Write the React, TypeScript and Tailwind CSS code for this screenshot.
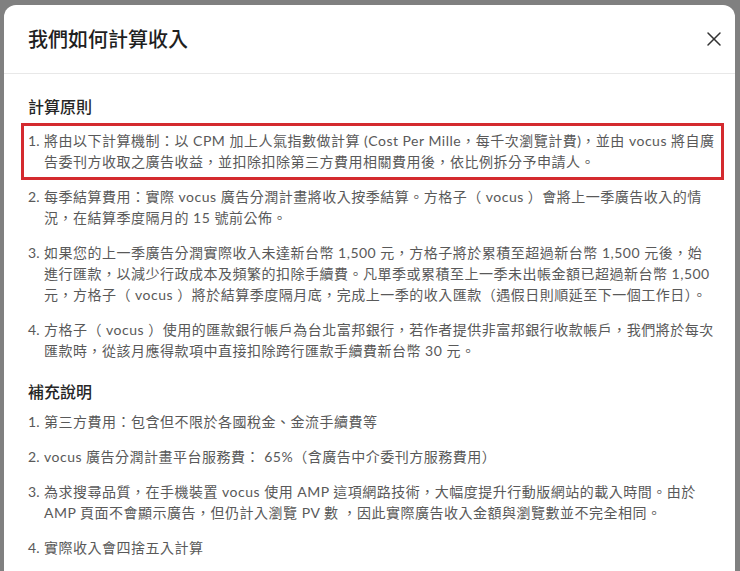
import React from "react";
import { X } from "lucide-react";

const principles: string[][] = [
  [
    "將由以下計算機制：以 CPM 加上人氣指數做計算 (Cost Per Mille，每千次瀏覽計費)，並由 vocus 將自廣",
    "告委刊方收取之廣告收益，並扣除扣除第三方費用相關費用後，依比例拆分予申請人。",
  ],
  [
    "每季結算費用：實際 vocus 廣告分潤計畫將收入按季結算。方格子（ vocus ）會將上一季廣告收入的情",
    "況，在結算季度隔月的 15 號前公佈。",
  ],
  [
    "如果您的上一季廣告分潤實際收入未達新台幣 1,500 元，方格子將於累積至超過新台幣 1,500 元後，始",
    "進行匯款，以減少行政成本及頻繁的扣除手續費。凡單季或累積至上一季未出帳金額已超過新台幣 1,500",
    "元，方格子（ vocus ）將於結算季度隔月底，完成上一季的收入匯款（遇假日則順延至下一個工作日）。",
  ],
  [
    "方格子（ vocus ）使用的匯款銀行帳戶為台北富邦銀行，若作者提供非富邦銀行收款帳戶，我們將於每次",
    "匯款時，從該月應得款項中直接扣除跨行匯款手續費新台幣 30 元。",
  ],
];

const notes: string[][] = [
  ["第三方費用：包含但不限於各國稅金、金流手續費等"],
  ["vocus 廣告分潤計畫平台服務費： 65%（含廣告中介委刊方服務費用）"],
  [
    "為求搜尋品質，在手機裝置 vocus 使用 AMP 這項網路技術，大幅度提升行動版網站的載入時間。由於",
    "AMP 頁面不會顯示廣告，但仍計入瀏覽 PV 數 ，因此實際廣告收入金額與瀏覽數並不完全相同。",
  ],
  ["實際收入會四捨五入計算"],
];

function Item({ n, lines, boxed }: { n: number; lines: string[]; boxed?: boolean }) {
  return (
    <li className="relative flex text-[14px] leading-[21px] tracking-[0.5px] text-[#595959]">
      <span className="w-4 shrink-0 tracking-normal">{n}.</span>
      <span className="whitespace-nowrap">
        {lines.map((l, i) => (
          <React.Fragment key={i}>
            {i > 0 && <br />}
            {l}
          </React.Fragment>
        ))}
      </span>
      {boxed && (
        <span className="pointer-events-none absolute -left-[7px] -right-[13px] -top-[7px] -bottom-[8px] border-[3px] border-[#d42a2f]" />
      )}
    </li>
  );
}

export default function App() {
  return (
    <div className="h-[571px] w-[740px] overflow-hidden bg-[#808080] pl-[4px] pt-[5px] font-['Lato','Noto_Sans_CJK_TC',sans-serif]">
      <div className="h-[600px] w-[731px] rounded-t-[12px] bg-white">
        <div className="flex h-[69px] items-center justify-between border-b border-[#e8e8e8] pl-6 pr-[5px]">
          <h1 className="text-[20px] font-medium leading-7 text-[#1f1f1f]">我們如何計算收入</h1>
          <button className="flex h-8 w-8 items-center justify-center text-[#333]">
            <X size={24} strokeWidth={1.5} />
          </button>
        </div>
        <div className="px-6 pt-[21px]">
          <h2 className="mb-[11px] text-[16px] font-medium leading-6 text-[#262626]">計算原則</h2>
          <ol className="flex flex-col gap-[14px]">
            {principles.map((t, i) => (
              <Item key={i} n={i + 1} lines={t} boxed={i === 0} />
            ))}
          </ol>
          <h2 className="mb-[7px] mt-[19px] text-[16px] font-medium leading-6 text-[#262626]">補充說明</h2>
          <ol className="flex flex-col gap-[14px]">
            {notes.map((t, i) => (
              <Item key={i} n={i + 1} lines={t} />
            ))}
          </ol>
        </div>
      </div>
    </div>
  );
}
